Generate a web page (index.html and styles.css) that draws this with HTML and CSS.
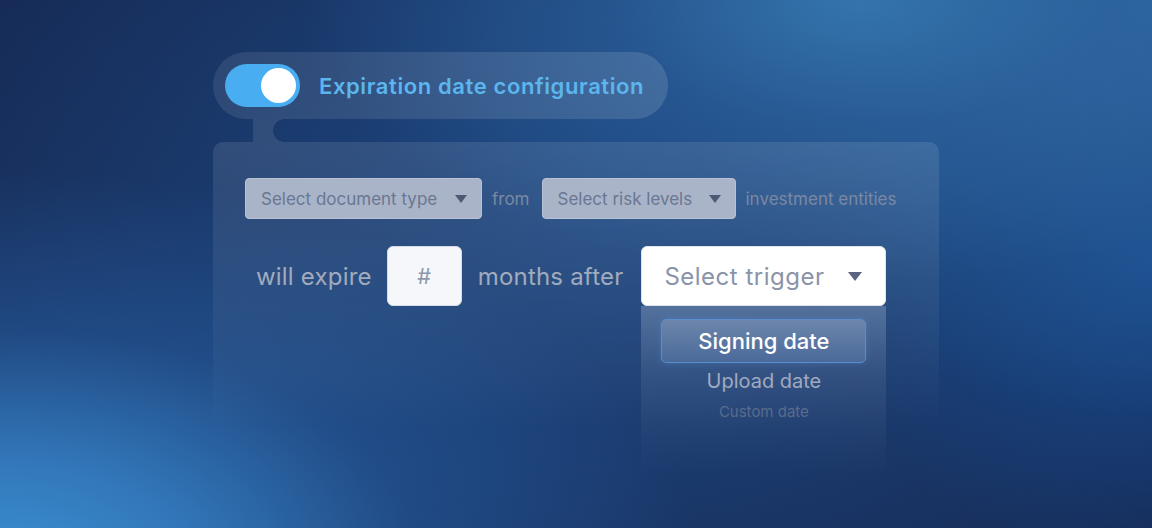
FILE: index.html
```html
<!DOCTYPE html>
<html>
<head>
<meta charset="utf-8">
<link rel="stylesheet" href="styles.css">
</head>
<body>
<div class="stage">
  <div class="pill">
    <div class="toggle"><div class="knob"></div></div>
    <div class="title">Expiration date configuration</div>
  </div>
  <div class="connector"><div class="neck"></div></div>
  <div class="panel">
    <div class="row1">
      <div class="sel sel-doc"><span>Select document type</span><i class="caret"></i></div>
      <span class="word">from</span>
      <div class="sel sel-risk"><span>Select risk levels</span><i class="caret"></i></div>
      <span class="word">investment entities</span>
    </div>
    <div class="row2">
      <span class="big">will expire</span>
      <div class="num">#</div>
      <span class="big">months after</span>
      <div class="trigger-wrap">
        <div class="trigger"><span>Select trigger</span><i class="caret caret-lg"></i></div>
        <div class="menu">
          <div class="opt opt-active">Signing date</div>
          <div class="opt opt-2">Upload date</div>
          <div class="opt opt-3">Custom date</div>
        </div>
      </div>
    </div>
  </div>
</div>
</body>
</html>
```
FILE: styles.css
```css
html, body {
  margin: 0;
  padding: 0;
}
body {
  width: 1152px;
  height: 528px;
  overflow: hidden;
  font-family: Inter, "Noto Sans", sans-serif;
  background-color: #172a55;
  background-image:
    radial-gradient(ellipse 700px 400px at 0px 570px, #3b91d2 0%, rgba(54,130,200,0.85) 28%, rgba(40,98,168,0.45) 60%, rgba(30,80,150,0) 100%),
    radial-gradient(ellipse 560px 280px at 860px 0px, #3474ad 0%, rgba(45,100,160,0.6) 45%, rgba(30,80,140,0) 100%),
    radial-gradient(ellipse 500px 420px at 1152px 0px, #2c65a0 0%, rgba(30,80,140,0) 100%),
    radial-gradient(ellipse 320px 320px at 1152px 260px, #17488a 0%, rgba(23,72,138,0) 100%),
    radial-gradient(ellipse 700px 500px at 620px 200px, #1c4680 0%, rgba(25,60,115,0) 100%),
    linear-gradient(160deg, #162a55 0%, #1a3462 50%, #162a55 100%);
}
.stage {
  padding: 52px 0 0 213px;
  width: 726px;
}
.pill {
  display: inline-flex;
  align-items: center;
  height: 67px;
  box-sizing: border-box;
  padding: 0 24px 0 12px;
  border-radius: 34px;
  background: linear-gradient(90deg, rgba(255,255,255,0.09), rgba(255,255,255,0.13));
}
.toggle {
  width: 75px;
  height: 43px;
  border-radius: 22px;
  background: #49aef1;
  display: flex;
  align-items: center;
  justify-content: flex-end;
  padding-right: 4px;
  box-sizing: border-box;
}
.knob {
  width: 35px;
  height: 35px;
  border-radius: 50%;
  background: #ffffff;
}
.title {
  margin-left: 19px;
  font-size: 22px;
  font-weight: 600;
  color: #5cb6ee;
  letter-spacing: 0.6px;
}
.connector {
  height: 23px;
  padding-left: 40px;
}
.neck {
  position: relative;
  width: 20px;
  height: 23px;
  background: rgba(255,255,255,0.1);
}
.neck::before,
.neck::after {
  content: "";
  position: absolute;
  left: 20px;
  width: 11px;
  height: 11px;
}
.neck::before {
  top: 0;
  background: radial-gradient(circle at 100% 100%, transparent 10.5px, rgba(255,255,255,0.1) 11px);
}
.neck::after {
  bottom: 0;
  background: radial-gradient(circle at 100% 0%, transparent 10.5px, rgba(255,255,255,0.1) 11px);
}
.panel {
  height: 250px;
  border-radius: 10px 10px 0 0;
  padding: 36px 32px 0;
  background: linear-gradient(180deg, rgba(255,255,255,0.1) 0%, rgba(255,255,255,0.07) 40%, rgba(255,255,255,0.03) 80%, rgba(255,255,255,0) 100%);
}
.row1 {
  display: flex;
  align-items: center;
  height: 41px;
  gap: 10px;
}
.sel {
  height: 41px;
  box-sizing: border-box;
  border-radius: 4px;
  background: #a9b4c9;
  border: 1px solid #b8c2d4;
  display: flex;
  align-items: center;
  justify-content: space-between;
  padding: 0 14px 0 15px;
  font-size: 17px;
  color: #6a7792;
}
.sel-doc { width: 237px; }
.sel-risk { width: 194px; margin-left: 2px; }
.word {
  font-size: 17px;
  color: #7b88a3;
}
.caret {
  width: 0;
  height: 0;
  border-left: 6px solid transparent;
  border-right: 6px solid transparent;
  border-top: 8px solid #4e5a74;
}
.caret-lg {
  border-left-width: 7px;
  border-right-width: 7px;
  border-top: 9px solid #5a6480;
}
.row2 {
  display: flex;
  align-items: center;
  margin-top: 27px;
  height: 60px;
  padding-left: 11px;
}
.big {
  font-size: 24px;
  color: #a2abbd;
  letter-spacing: 0.2px;
}
.num {
  width: 75px;
  height: 60px;
  box-sizing: border-box;
  margin: 0 16px 0 15px;
  border-radius: 6px;
  background: #f5f7fb;
  border: 1px solid #d6dce6;
  display: flex;
  align-items: center;
  justify-content: center;
  font-size: 22px;
  color: #8f98ab;
}
.trigger-wrap {
  position: relative;
  margin-left: 18px;
}
.trigger {
  width: 245px;
  height: 60px;
  box-sizing: border-box;
  border-radius: 6px;
  background: #ffffff;
  border: 1px solid #dfe3ea;
  display: flex;
  align-items: center;
  justify-content: space-between;
  padding: 0 23px 0 22px;
  font-size: 24px;
  letter-spacing: 0.5px;
  color: #8a93a8;
}
.menu {
  position: absolute;
  left: 0;
  top: 60px;
  width: 245px;
  height: 170px;
  padding-top: 13px;
  box-sizing: border-box;
  display: flex;
  flex-direction: column;
  align-items: center;
  background: linear-gradient(180deg, rgba(150,170,200,0.4) 0%, rgba(120,140,180,0.2) 40%, rgba(100,120,160,0.08) 80%, rgba(100,120,160,0) 100%);
}
.opt {
  text-align: center;
}
.opt-active {
  width: 205px;
  height: 44px;
  box-sizing: border-box;
  border-radius: 5px;
  border: 1px solid #5b8ccb;
  background: linear-gradient(180deg, #6d86ab 0%, #4a6a9a 100%);
  box-shadow: 0 0 6px rgba(90,150,220,0.35);
  color: #ffffff;
  font-size: 22px;
  font-weight: 500;
  line-height: 42px;
}
.opt-2 {
  margin-top: 5px;
  font-size: 20px;
  line-height: 26px;
  color: #a0aabe;
}
.opt-3 {
  margin-top: 8px;
  font-size: 15px;
  line-height: 20px;
  color: #5a6b8c;
}
```
